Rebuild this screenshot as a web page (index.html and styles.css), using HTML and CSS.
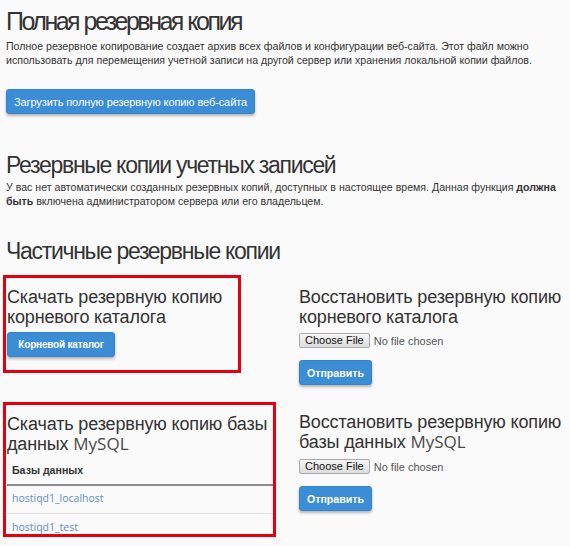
FILE: index.html
```html
<!DOCTYPE html>
<html lang="ru">
<head>
<meta charset="utf-8">
<link rel="stylesheet" href="styles.css">
</head>
<body>
<div class="page">
  <h1 class="h1">Полная резервная копия</h1>
  <p class="desc">Полное резервное копирование создает архив всех файлов и конфигурации веб-сайта. Этот файл можно использовать для перемещения учетной записи на другой сервер или хранения локальной копии файлов.</p>
  <button class="btn btn-wide">Загрузить полную резервную копию веб-сайта</button>

  <h1 class="h1 h1-second">Резервные копии учетных записей</h1>
  <p class="desc desc-second">У вас нет автоматически созданных резервных копий, доступных в настоящее время. Данная функция <b>должна быть</b> включена администратором сервера или его владельцем.</p>

  <h1 class="h1 h1-third">Частичные резервные копии</h1>

  <div class="grid">
    <div class="cell left">
      <div class="mark mark-1">
        <h2 class="h2">Скачать резервную копию корневого каталога</h2>
        <button class="btn btn-small">Корневой каталог</button>
      </div>
    </div>
    <div class="cell right right-1">
      <h2 class="h2">Восстановить резервную копию корневого каталога</h2>
      <div class="file file-1"><span class="choose">Choose File</span><span class="nofile">No file chosen</span></div>
      <button class="btn btn-send">Отправить</button>
    </div>

    <div class="cell left">
      <div class="mark mark-2">
        <h2 class="h2">Скачать резервную копию базы данных <span class="latin">MySQL</span></h2>
        <table class="db">
          <thead><tr><th>Базы данных</th></tr></thead>
          <tbody>
            <tr><td><a href="#">hostiqd1_localhost</a></td></tr>
            <tr class="last"><td><a href="#">hostiqd1_test</a></td></tr>
          </tbody>
        </table>
      </div>
    </div>
    <div class="cell right right-2">
      <h2 class="h2">Восстановить резервную копию базы данных <span class="latin">MySQL</span></h2>
      <div class="file file-2"><span class="choose">Choose File</span><span class="nofile">No file chosen</span></div>
      <button class="btn btn-send">Отправить</button>
    </div>
  </div>
</div>
</body>
</html>
```

FILE: styles.css
```css
html, body {
  margin: 0;
  padding: 0;
  background: #fafafa;
}
body {
  font-family: "Liberation Sans", Arial, sans-serif;
  color: #333;
}
.page {
  padding: 0 0 0 6px;
}
.h1 {
  font-size: 25px;
  font-weight: normal;
  line-height: 28px;
  letter-spacing: -2.5px;
  word-spacing: 1px;
  margin: 7px 0 0 0;
  color: #333;
}
.h1-second,
.h1-third {
  font-size: 23px;
  line-height: 26px;
  letter-spacing: -1.3px;
  word-spacing: 0;
}
.h1-second {
  margin-top: 38px;
}
.h1-third {
  margin-top: 30px;
}
.desc {
  font-size: 10.6px;
  line-height: 14px;
  margin: 4px 0 0 0;
  padding-right: 6px;
  color: #333;
}
.desc-second {
  margin-top: 2px;
}
.btn {
  display: block;
  font-family: "Liberation Sans", Arial, sans-serif;
  background: #3b8dd5;
  color: #fff;
  border: 1px solid #3584ca;
  border-radius: 3px;
  box-shadow: 0 2px 3px rgba(0, 0, 0, 0.28);
  font-size: 10.6px;
  padding: 0;
  cursor: pointer;
}
.btn-wide {
  margin-top: 22px;
  width: 249px;
  height: 25px;
  font-size: 11px;
  letter-spacing: -0.1px;
}
.grid {
  display: grid;
  grid-template-columns: 293px 1fr;
  row-gap: 17px;
  margin-top: 11px;
}
.left {
  margin-left: -3px;
}
.mark {
  border: 3px solid #e6000e;
  box-sizing: border-box;
  padding: 9px 0 0 1px;
}
.mark-1 {
  width: 238px;
  height: 98px;
}
.mark-2 {
  width: 273px;
  height: 135px;
}
.right-1 {
  padding-top: 12px;
}
.right-2 {
  padding-top: 10px;
}
.h2 {
  font-size: 18px;
  font-weight: normal;
  line-height: 20px;
  letter-spacing: -0.15px;
  margin: 0;
  color: #333;
}
.latin {
  font-family: "Open Sans", sans-serif;
  color: #4a4a4a;
  font-size: 17px;
  letter-spacing: 0;
}
.btn-small {
  margin-top: 5px;
  width: 108px;
  height: 25px;
  font-weight: bold;
  font-size: 10px;
  letter-spacing: -0.2px;
}
.file {
  display: flex;
  align-items: center;
  height: 15px;
}
.file-1 {
  margin-top: 6px;
}
.file-2 {
  margin-top: 7px;
}
.choose {
  font-family: "Liberation Sans", Arial, sans-serif;
  font-size: 11px;
  color: #111;
  background: linear-gradient(#f6f6f6, #dddddd);
  border: 1px solid #a8a8a8;
  border-radius: 2px;
  padding: 0 5px;
  line-height: 13px;
}
.nofile {
  font-size: 11px;
  color: #555;
  margin-left: 4px;
}
.btn-send {
  margin-top: 12px;
  width: 73px;
  height: 25px;
  font-weight: bold;
  font-size: 10.6px;
}
.db {
  width: 100%;
  border-collapse: separate;
  border-spacing: 0;
  margin: 0;
}
.db th {
  text-align: left;
  font-size: 10.6px;
  line-height: 14px;
  font-weight: bold;
  color: #333;
  padding: 9px 5px 7px 5px;
  border-bottom: 2px solid #8c8c8c;
}
.db td {
  font-family: "Open Sans", sans-serif;
  font-size: 10.5px;
  line-height: 14px;
  padding: 5px 5px 8px 5px;
  border-bottom: 1px solid #e2e2e2;
}
.db tr.last td {
  padding: 6px 5px 0 5px;
  border-bottom: none;
}
.db a {
  color: #5d8fc9;
  text-decoration: none;
}
```
